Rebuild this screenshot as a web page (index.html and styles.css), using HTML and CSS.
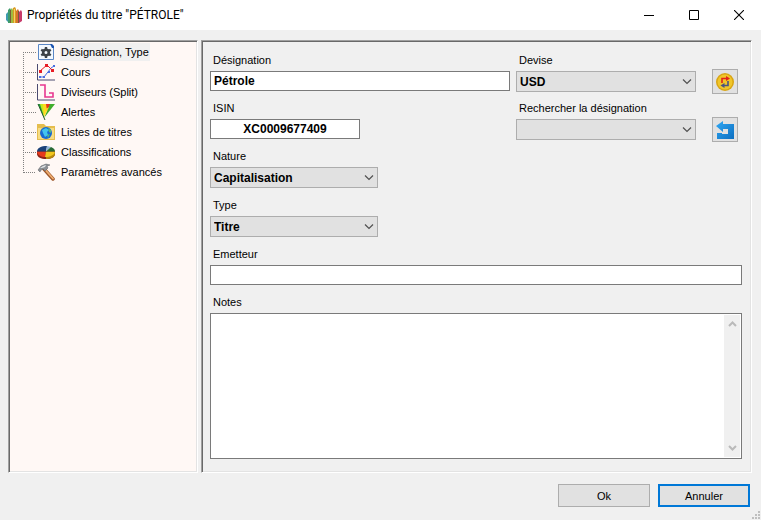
FILE: index.html
```html
<!DOCTYPE html>
<html lang="fr">
<head>
    <meta charset="UTF-8">
    <meta name="viewport" content="width=device-width, initial-scale=1.0">
    <title>Propriétés du titre "PÉTROLE"</title>
    <link rel="stylesheet" href="styles.css">
</head>
<body>
    <!-- Title bar -->
    <header class="titlebar">
        <svg class="app-icon" width="18" height="18" viewBox="0 0 18 18">
            <path d="M1 8l2-2v10l-2-2z" fill="#3f9bb0"/>
            <path d="M3 4l2-2 1 2v13H3z" fill="#3f9b6c"/>
            <path d="M6 3l1-1 1 2v13H6z" fill="#9dbb3f"/>
            <path d="M8 2l2-1 1 2v14H8z" fill="#d99a20"/>
            <path d="M9 3h1v14H9z" fill="#f3d36b"/>
            <path d="M11 5l2-2 1 2v12h-3z" fill="#d8702c"/>
            <path d="M14 6l2-2 1 2v9l-3 2z" fill="#c83b6b"/>
            <path d="M13 5h1v12h-1zM5 4h1v13H5z" fill="#7a5a3a"/>
        </svg>
        <h1>Propriétés du titre "PÉTROLE"</h1>
        <div class="window-buttons">
            <button type="button" aria-label="Réduire">
                <svg width="10" height="10" viewBox="0 0 10 10"><path d="M0 5.500h10" stroke="#000"/></svg>
            </button>
            <button type="button" aria-label="Agrandir">
                <svg width="10" height="10" viewBox="0 0 10 10"><path d="M.5.5h9v9h-9z" fill="none" stroke="#000"/></svg>
            </button>
            <button type="button" aria-label="Fermer">
                <svg width="10" height="10" viewBox="0 0 10 10"><path d="M0 0l10 10M10 0L0 10" stroke="#000" stroke-width="1.1"/></svg>
            </button>
        </div>
    </header>

    <form class="dialog" id="titleForm">
        <div class="panels">
            <!-- Section tree -->
            <nav class="panel tree">
                <ul>
                    <li>
                        <svg width="18" height="18" viewBox="0 0 18 18">
                            <path d="M1.500 1.500h12l3 3v12h-15z" fill="#f4f9ff" stroke="#5b87c5"/>
                            <path d="M13 1h2l2 2v2h-2z" fill="#1d55b0"/>
                            <circle cx="9" cy="9.500" r="2.800" fill="none" stroke="#3c4248" stroke-width="2.600"/>
                            <path d="M9 4v2M9 13v2M4.200 6.800l2 1.200M11.800 11l2 1.200M4.200 12.200l2-1.200M11.800 8l2-1.200" stroke="#3c4248" stroke-width="2.400"/>
                        </svg>
                        <a href="#" class="selected">Désignation, Type</a>
                    </li>
                    <li>
                        <svg width="18" height="18" viewBox="0 0 18 18">
                            <path d="M.5 1v16H18" fill="none" stroke="#4a4a70"/>
                            <path d="M3 14h4l7-9 3-2" fill="none" stroke="#4b6fe0"/>
                            <path d="M3 8l7-6 6 6" fill="none" stroke="#e81c24"/>
                            <path d="M2 13h2v2H2zM6 13h2v2H6zM11 8h2v2h-2zM16 2h2v2h-2z" fill="#4b6fe0"/>
                            <path d="M2 7h3v3H2zM8 1h3v3H8zM14 6h3v3h-3z" fill="#e81c24"/>
                        </svg>
                        <a href="#">Cours</a>
                    </li>
                    <li>
                        <svg width="18" height="18" viewBox="0 0 18 18">
                            <path d="M.5 1v16H18" fill="none" stroke="#4a4a70"/>
                            <path d="M3 2h5v12h8v-4h-4" fill="none" stroke="#e8378f" stroke-width="1.600"/>
                        </svg>
                        <a href="#">Diviseurs (Split)</a>
                    </li>
                    <li>
                        <svg width="18" height="18" viewBox="0 0 18 18">
                            <path d="M1 1h4l2 14z" fill="#20a038"/>
                            <path d="M3 1h4v13z" fill="#c4e820"/>
                            <path d="M6 1h5l-4 13z" fill="#ffd91c"/>
                            <path d="M9 1h5l-4 7z" fill="#e5351b"/>
                            <path d="M13 1h5L7 15z" fill="#3fae2c"/>
                            <path d="M12 4l-5 10 2-8z" fill="#ffd91c"/>
                            <path d="M1 1l7 16" stroke="#245c28"/>
                        </svg>
                        <a href="#">Alertes</a>
                    </li>
                    <li>
                        <svg width="18" height="18" viewBox="0 0 18 18">
                            <path d="M0 1h7l2 2h9v14H0z" fill="#e5bd4e"/>
                            <path d="M1 5h16v11H1z" fill="#f6dc84"/>
                            <circle cx="9" cy="10" r="6" fill="#1769d2"/>
                            <path d="M5 7l4-2 3 2-2 2 1 3-3 2-2-4z" fill="#42c4ee"/>
                            <path d="M11 5l3 2v3l-2-1zM10 12l3-1-2 4z" fill="#51b978"/>
                        </svg>
                        <a href="#">Listes de titres</a>
                    </li>
                    <li>
                        <svg width="18" height="18" viewBox="0 0 18 18">
                            <path d="M0 8v3c0 3 4 5 9 5s9-2 9-5V8z" fill="#8d2418"/>
                            <path d="M9 15v-5h9v1c0 3-4 5-9 5z" fill="#b58a10"/>
                            <path d="M9 8.500H0C0 12 4 14 8 14z" fill="#e73a1c"/>
                            <path d="M9 8.500L8 14c5 0 10-2 10-5.500z" fill="#f2c61e"/>
                            <path d="M9 8.500H0C0 5 4 3 10 3z" fill="#1b4178"/>
                            <path d="M9 8.500L10 3l4 1z" fill="#8fb4d6"/>
                            <path d="M9 8.500L14 4c3 1 4 3 4 4.500z" fill="#296b35"/>
                        </svg>
                        <a href="#">Classifications</a>
                    </li>
                    <li>
                        <svg width="18" height="18" viewBox="0 0 18 18">
                            <path d="M7 6l9 10" stroke="#9d572a" stroke-width="3.500" stroke-linecap="round"/>
                            <path d="M8 6.500l8 9" stroke="#f0ae70" stroke-width="1.800" stroke-linecap="round"/>
                            <path d="M1 7l3-4 5-2 4 1-3 1 1 2-3 3-2-2-2 1-1 2z" fill="#8b9096" stroke="#565b60" stroke-width=".5"/>
                            <path d="M3 5l3-2 3-1-1 2-3 1z" fill="#dfe3e6"/>
                        </svg>
                        <a href="#">Paramètres avancés</a>
                    </li>
                </ul>
            </nav>

            <!-- Properties -->
            <section class="panel properties">
                <div class="identity">
                    <div class="field">
                        <label for="designation">Désignation</label>
                        <input type="text" id="designation" value="Pétrole">
                    </div>
                    <div class="field">
                        <label for="currency">Devise</label>
                        <div class="combo">
                            <select id="currency"><option>USD</option></select>
                            <svg width="10" height="6" viewBox="0 0 10 6"><path d="M1 .5l4 4 4-4" fill="none" stroke="#505050" stroke-width="1.200"/></svg>
                        </div>
                    </div>
                    <button type="button" class="tool" aria-label="Convertir la devise">
                        <svg width="20" height="20" viewBox="0 0 20 20">
                            <circle cx="10" cy="10" r="9" fill="#d9a514"/>
                            <circle cx="10" cy="10" r="7.500" fill="#f0c62a"/>
                            <path d="M7 11V6.500h5" fill="none" stroke="#e2231a" stroke-width="1.600"/>
                            <path d="M11 4l4 2.500L11 9z" fill="#e2231a"/>
                            <path d="M13 9v4.500H9" fill="none" stroke="#4a5480" stroke-width="1.600"/>
                            <path d="M9.500 11l-4 2.500 4 2.500z" fill="#4a5480"/>
                        </svg>
                    </button>

                    <div class="field">
                        <label for="isin">ISIN</label>
                        <input type="text" id="isin" class="isin" value="XC0009677409">
                    </div>
                    <div class="field">
                        <label for="lookup">Rechercher la désignation</label>
                        <div class="combo">
                            <select id="lookup"><option></option></select>
                            <svg width="10" height="6" viewBox="0 0 10 6"><path d="M1 .5l4 4 4-4" fill="none" stroke="#505050" stroke-width="1.200"/></svg>
                        </div>
                    </div>
                    <button type="button" class="tool" aria-label="Reprendre la désignation">
                        <svg width="20" height="20" viewBox="0 0 20 20">
                            <defs>
                                <linearGradient id="blue" x1="0" y1="0" x2="1" y2="1">
                                    <stop offset="0" stop-color="#2fa8f5"/>
                                    <stop offset="1" stop-color="#0d6fc0"/>
                                </linearGradient>
                            </defs>
                            <path d="M1 6l7-5v3h11v15H2v-6h5v1h6V9H8v3z" fill="url(#blue)"/>
                        </svg>
                    </button>
                </div>

                <div class="details">
                    <div class="field short">
                        <label for="nature">Nature</label>
                        <div class="combo">
                            <select id="nature"><option>Capitalisation</option></select>
                            <svg width="10" height="6" viewBox="0 0 10 6"><path d="M1 .5l4 4 4-4" fill="none" stroke="#505050" stroke-width="1.200"/></svg>
                        </div>
                    </div>
                    <div class="field short">
                        <label for="type">Type</label>
                        <div class="combo">
                            <select id="type"><option>Titre</option></select>
                            <svg width="10" height="6" viewBox="0 0 10 6"><path d="M1 .5l4 4 4-4" fill="none" stroke="#505050" stroke-width="1.200"/></svg>
                        </div>
                    </div>
                    <div class="field">
                        <label for="issuer">Emetteur</label>
                        <input type="text" id="issuer">
                    </div>
                    <div class="field notes">
                        <label for="notes">Notes</label>
                        <div class="notes-box">
                            <textarea id="notes"></textarea>
                            <div class="scrollbar">
                                <svg width="9" height="6" viewBox="0 0 9 6"><path d="M1 5l3.500-3.500L8 5" fill="none" stroke="#bababa" stroke-width="2"/></svg>
                                <svg width="9" height="6" viewBox="0 0 9 6"><path d="M1 1l3.500 3.500L8 1" fill="none" stroke="#bababa" stroke-width="2"/></svg>
                            </div>
                        </div>
                    </div>
                </div>
            </section>
        </div>

        <!-- Bottom buttons -->
        <footer class="actions">
            <button type="submit">Ok</button>
            <button type="button" class="default">Annuler</button>
        </footer>
        <svg class="grip" width="8" height="8" viewBox="0 0 8 8">
            <path d="M6 0h2v2H6zM3 3h2v2H3zM6 3h2v2H6zM0 6h2v2H0zM3 6h2v2H3zM6 6h2v2H6z" fill="#bfbfbf"/>
        </svg>
    </form>

    <script>
        // Keep the dialog open, there is nothing to send
        document.getElementById("titleForm").addEventListener("submit", function(event) {
            event.preventDefault();
        });

        // Move the highlight to the clicked section
        document.querySelectorAll(".tree a").forEach(link => {
            link.addEventListener("click", function(event) {
                event.preventDefault();
                document.querySelector(".tree a.selected").classList.remove("selected");
                this.classList.add("selected");
            });
        });
    </script>
</body>
</html>
```
FILE: styles.css
```css
/* Reset default browser styles */
* {
    margin: 0;
    padding: 0;
    box-sizing: border-box;
}

body {
    display: flex;
    flex-direction: column;
    height: 100vh;
    background-color: #f0f0f0;
    color: #000;
    font-family: "Liberation Sans", Arial, sans-serif;
    font-size: 11px;
}

button, input, select, textarea {
    font: inherit;
    color: inherit;
    border-radius: 0;
    outline: none;
}

svg {
    display: block;
    flex: none;
}

/* Title bar */
.titlebar {
    display: flex;
    align-items: center;
    height: 30px;
    padding-left: 5px;
    background-color: #fff;
}

.titlebar h1 {
    flex: 1;
    margin-left: 4px;
    font-family: Roboto, sans-serif;
    font-size: 12px;
    font-weight: normal;
}

.window-buttons {
    display: flex;
}

.window-buttons button {
    display: flex;
    align-items: center;
    justify-content: center;
    width: 45px;
    height: 28px;
    border: none;
    background: none;
}

/* Dialog */
.dialog {
    position: relative;
    flex: 1;
    display: flex;
    flex-direction: column;
    padding: 10px 9px 13px 8px;
}

.panels {
    flex: 1;
    display: flex;
    gap: 3px;
}

/* Sunken 3D border */
.panel {
    border: 1px solid;
    border-color: #a0a0a0 #fff #fff #a0a0a0;
    box-shadow: inset 1px 1px #696969, inset -1px -1px #e3e3e3;
}

/* Tree */
.tree {
    width: 190px;
    padding: 1px 0 0 14px;
    background-color: #fff8f5;
}

.tree ul {
    list-style: none;
}

.tree li {
    position: relative;
    display: flex;
    align-items: center;
    height: 20px;
    padding-left: 14px;
}

/* Dotted connectors */
.tree li::before {
    content: "";
    position: absolute;
    left: 0;
    top: 10px;
    width: 12px;
    height: 20px;
    border-top: 1px dotted #808080;
    border-left: 1px dotted #808080;
}

.tree li:last-child::before {
    height: 1px;
    border-left: none;
}

.tree a {
    margin-left: 5px;
    padding: 0 1px;
    line-height: 18px;
    color: #000;
    text-decoration: none;
}

.tree a.selected {
    background-color: #f0f0f0;
}

/* Properties */
.properties {
    flex: 1;
    display: flex;
    flex-direction: column;
    gap: 5px;
    padding: 8px 9px 13px 8px;
}

.identity {
    display: grid;
    grid-template-columns: 5fr 3fr 40px;
    gap: 5px 6px;
}

.details {
    flex: 1;
    display: flex;
    flex-direction: column;
    gap: 6px;
}

.field label {
    display: block;
    padding-left: 3px;
    line-height: 22px;
}

.short {
    width: 168px;
}

.field input {
    display: block;
    width: 100%;
    height: 20px;
    padding: 0 3px;
    border: 1px solid #7a7a7a;
    background-color: #fff;
    font-size: 12px;
    font-weight: bold;
}

.field .isin {
    width: 50%;
    text-align: center;
}

.combo {
    position: relative;
}

.combo select {
    display: block;
    appearance: none;
    width: 100%;
    height: 21px;
    padding: 0 20px 0 3px;
    border: 1px solid #adadad;
    background-color: #e1e1e1;
    font-size: 12px;
    font-weight: bold;
}

.combo svg {
    position: absolute;
    right: 4px;
    top: 8px;
    pointer-events: none;
}

.tool {
    display: flex;
    align-items: center;
    justify-content: center;
    place-self: end center;
    width: 26px;
    height: 25px;
    margin: 0 0 -2px 6px;
    border: 1px solid #adadad;
    background-color: #e1e1e1;
}

/* Notes */
.notes {
    flex: 1;
    display: flex;
    flex-direction: column;
}

.notes-box {
    flex: 1;
    display: flex;
    padding: 1px;
    border: 1px solid #7a7a7a;
    background-color: #fff;
}

.notes-box textarea {
    flex: 1;
    padding: 2px;
    border: none;
    resize: none;
    font-size: 12px;
    font-weight: bold;
}

.scrollbar {
    display: flex;
    flex-direction: column;
    justify-content: space-between;
    align-items: center;
    width: 16px;
    padding: 6px 0;
    background-color: #f0f0f0;
}

/* Bottom buttons */
.actions {
    display: flex;
    justify-content: flex-end;
    gap: 8px;
    margin-top: 11px;
    padding-right: 2px;
}

.actions button {
    width: 92px;
    height: 23px;
    border: 1px solid #adadad;
    background-color: #e1e1e1;
}

.actions .default {
    border: 2px solid #0078d7;
}

.grip {
    position: absolute;
    right: 1px;
    bottom: 1px;
}
```
